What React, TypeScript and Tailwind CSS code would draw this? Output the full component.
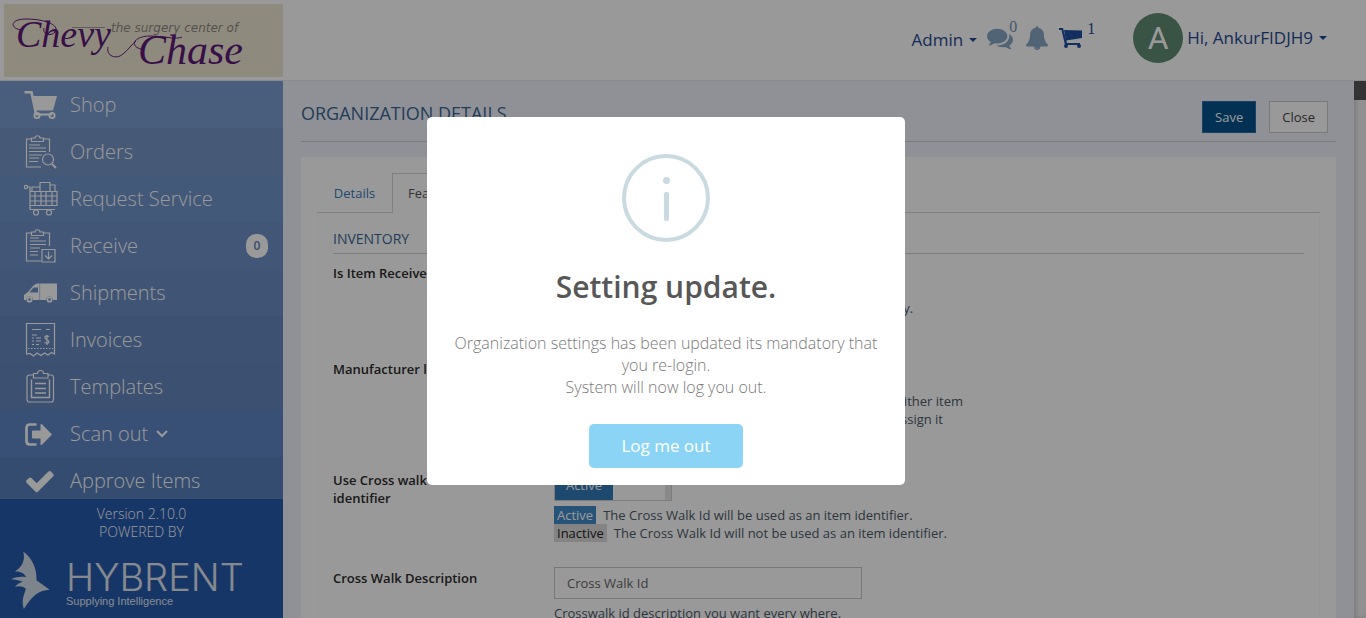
import type { ReactNode } from "react";

function Line({ children, label }: { children: ReactNode; label: string }) {
  return (
    <svg viewBox="0 0 34 36" className="h-9 w-[34px] shrink-0" fill="none" stroke="white" strokeWidth="1.2" data-icon={label} aria-hidden="true">
      {children}
    </svg>
  );
}

const CartIcon = (
  <Line label="cart">
    <path d="M0.5 5.2H7.500L12 27" strokeWidth="2.6" />
    <path d="M8 9H33L29 23.500H11Z" fill="white" stroke="none" />
    <path d="M12 27.500H28" strokeWidth="2.2" />
    <circle cx="13" cy="28.500" r="2.600" strokeWidth="2" />
    <circle cx="28" cy="28.500" r="2.600" strokeWidth="2" />
  </Line>
);

const clip = (
  <>
    <path d="M7 5H2.500V33H17M20 5H25.500V18" />
    <path d="M7.500 4H11C11 1 16 1 16 4H19.500V7.500H7.500Z" />
  </>
);

const OrdersIcon = (
  <Line label="orders">
    {clip}
    <path d="M5 11H16M5 14H22M5 17.500H22M5 21H18M5 24H15M5 27.500H14" />
    <circle cx="24" cy="25.500" r="5.500" />
    <path d="M28 30L32 34" strokeWidth="1.800" />
  </Line>
);

const RequestIcon = (
  <Line label="request">
    <circle cx="2" cy="6" r="1.700" />
    <path d="M4 6H6V28.500H31M6 10.500H33V24.500H6M8 10V6H16M16 10V1.500H26V10M26 4H31V10" />
    <path d="M6 15H33M6 20H33M11 10V25M17 10V25M22 10V25M28 10V25" />
    <circle cx="12" cy="31.500" r="2.500" />
    <circle cx="25" cy="31.500" r="2.500" />
  </Line>
);

const ReceiveIcon = (
  <Line label="receive">
    {clip}
    <path d="M6 10H15M6 13H22M6 16.500H22M6 20H16M6 23.500H14M6 27H14" />
    <path d="M18 21.500H31V34H18Z" />
    <path d="M24.500 23.500V31M21 27.500L24.500 31L28 27.500" />
  </Line>
);

const TruckIcon = (
  <Line label="truck">
    <path d="M16 8.500H33V25H29A3.500 3.500 0 0 0 22 25H9A3.500 3.500 0 0 0 2 25H0V20L4 17L9 11C11 9 13 8.500 15.500 8.500Z" fill="white" stroke="none" />
    <path d="M5.500 17.500L9.500 12.500H14V17.500Z" fill="#6c8fc6" stroke="none" />
    <path d="M15.700 8.500V25" stroke="#9db5da" strokeWidth="0.800" />
    <circle cx="5.500" cy="24.500" r="2.200" strokeWidth="1.800" />
    <circle cx="25.500" cy="24.500" r="2.200" strokeWidth="1.800" />
  </Line>
);

const InvoiceIcon = (
  <Line label="invoice">
    <path d="M2.500 32V1.500H30.500V32L27.500 30.500L24 33L20.500 31L17 33.500L13 31L9.500 34L6 31.500Z" />
    <path d="M8 7.500H17M22 7.500H26M8 13H13M8 16H10M12 16H17M8 19H10M12 19H17M8 22.500H10M12 22.500H15" />
    <path d="M25 14.500C22 13 20.500 14 21 16C21.500 18 25 17.500 25 20C24.500 21.500 22.500 21.500 20.500 20.500M23 13V23" />
    <path d="M4 26.500H29" strokeDasharray="1.500 1.500" />
  </Line>
);

const TemplatesIcon = (
  <Line label="templates">
    <path d="M9 6H5.500Q3 6 3 8.500V30.500Q3 33 5.500 33H27Q29.500 33 29.500 30.500V8.500Q29.500 6 27 6H24" />
    <path d="M9.500 4.500H13.500C13.500 0.500 19.500 0.500 19.500 4.500H24V9H9.500Z" />
    <path d="M7.500 10.500V28.500H25.500V10.500M11 14.500H22M11 19.500H22M11 24H22" strokeWidth="1.400" />
  </Line>
);

const ScanIcon = (
  <Line label="scan-out">
    <path d="M12.500 8.500H6Q2.500 8.500 2.500 12V25Q2.500 28.500 6 28.500H12.500" strokeWidth="2.700" />
    <path d="M9 14.500H16.500V8.500Q17 7.500 18 8.300L28 18.500L18 28.700Q17 29.500 16.500 28.500V22.500H9Q8 22.500 8 21.500V15.500Q8 14.500 9 14.500Z" fill="white" stroke="none" />
  </Line>
);

const CheckIcon = (
  <svg viewBox="60 0 1792 1792" className="h-[34px] w-[34px] shrink-0 p-px" fill="white" aria-hidden="true">
    <path d="M1671 566q0 40-28 68l-724 724-136 136q-28 28-68 28t-68-28l-136-136-362-362q-28-28-28-68t28-68l136-136q28-28 68-28t68 28l294 295 656-657q28-28 68-28t68 28l136 136q28 28 28 68z" />
  </svg>
);

const menu = [
  { name: "Shop", icon: CartIcon, tone: "bg-[#7b9bcf]" },
  { name: "Orders", icon: OrdersIcon, tone: "bg-[#7696c7]" },
  { name: "Request Service", icon: RequestIcon, tone: "bg-[#7094ca]" },
  { name: "Receive", icon: ReceiveIcon, tone: "bg-[#6e90c8]", badge: "0" },
  { name: "Shipments", icon: TruckIcon, tone: "bg-[#6b8cc3]" },
  { name: "Invoices", icon: InvoiceIcon, tone: "bg-[#6789be]" },
  { name: "Templates", icon: TemplatesIcon, tone: "bg-[#6486bc]" },
  { name: "Scan out", icon: ScanIcon, tone: "bg-[#5f86c5]", open: true },
  { name: "Approve Items", icon: CheckIcon, tone: "bg-[#577fbb]" },
];

function Caret() {
  return <span aria-hidden="true" className="border-x-4 border-t-4 border-x-transparent border-t-current" />;
}

function BrandLogo() {
  return (
    <svg viewBox="0 0 279 73" className="block h-[73px] w-full bg-[#efe7d3]" preserveAspectRatio="xMinYMid meet" role="img" aria-label="Chevy Chase, the surgery center of">
      <g fill="none" stroke="#5e1a78" strokeWidth="1">
        <path d="M18 26C6 25 5 15 22 15C42 15 58 22 50 29C45 33 38 29 40 24" />
        <path d="M137 45C125 42 130 32 146 32C160 32 172 36 178 33" />
        <path d="M104 43C102 52 112 56 119 50C124 46 128 40 132 37" />
      </g>
      <path d="M68 23.500H101" stroke="#a39d92" strokeWidth="1" />
      <text x="107" y="28" fontFamily="DejaVu Sans, sans-serif" fontStyle="italic" fontSize="12" fill="#8f8a84">the surgery center of</text>
      <g fontFamily="Liberation Serif, serif" fontStyle="italic" fill="#5e1a78">
        <text x="12" y="43" fontSize="38">Chevy</text>
        <text x="134" y="60" fontSize="42">Chase</text>
      </g>
    </svg>
  );
}

function Header() {
  return (
    <header className="flex shrink-0 items-start border-b border-[#e4e6ea] bg-white">
      <div className="w-[283px] shrink-0 pt-1 pb-[3px] pl-1">
        <BrandLogo />
      </div>
      <div className="flex flex-1 items-center justify-end pt-[13px] pr-[39px] text-[17px] leading-6 text-[#1f4a94]">
        <button className="flex items-center gap-[6px] pt-1">
          Admin <Caret />
        </button>
        <button className="relative ml-[10px]" aria-label="Messages">
          <svg viewBox="0 0 1792 1792" className="h-[26px] w-[26px]" fill="#87a7c5">
            <path d="M1408 768q0 139-94 257t-256.500 186.500-353.500 68.500q-86 0-176-16-124 88-278 128-36 9-86 16h-3q-11 0-20.500-8t-11.500-21q-1-3-1-6.500t.5-6.500 2-6l2.500-5 3.500-5.500 4-5 4.500-5 4-4.500q5-6 23-25t26-29.500 22.500-29 25-38.500 20.500-44q-124-72-195-177t-71-224q0-139 94-257t256.500-186.500 353.500-68.500 353.500 68.500 256.500 186.500 94 257zm384 256q0 120-71 224.500t-195 176.500q10 24 20.500 44t25 38.500 22.500 29 26 29.500 23 25q1 1 4 4.500t4.500 5 4 5 3.500 5.500l2.500 5 2 6 .5 6.500-1 6.500q-3 14-13 22t-22 7q-50-7-86-16-154-40-278-128-90 16-176 16-271 0-472-132 58 4 88 4 161 0 309-45t264-129q125-92 192-212t67-254q0-77-23-152 129 71 204 178t75 230z" />
          </svg>
          <span className="absolute -top-2 left-[22px] font-['Liberation_Serif',serif] text-base leading-5 text-[#6f93b8]">0</span>
        </button>
        <button className="ml-3" aria-label="Notifications">
          <svg viewBox="0 0 1792 1792" className="h-6 w-6" fill="#87a7c5">
            <path d="M912 1696q0-16-16-16-59 0-101.500-42.500t-42.500-101.500q0-16-16-16t-16 16q0 73 51.500 124.500t124.500 51.500q16 0 16-16zm816-288q0 52-38 90t-90 38h-448q0 106-75 181t-181 75-181-75-75-181h-448q-52 0-90-38t-38-90q50-42 91-88t85-119.500 74.500-158.500 50-206 19.500-260q0-152 117-282.500t307-158.500q-8-19-8-39 0-40 28-68t68-28 68 28 28 68q0 20-8 39 190 28 307 158.500t117 282.500q0 139 19.500 260t50 206 74.500 158.500 85 119.500 91 88z" />
          </svg>
        </button>
        <button className="relative mr-[50px] ml-[10px]" aria-label="Cart">
          <svg viewBox="0 0 24 22" className="h-[22px] w-6" fill="#1f4f9f">
            <path d="M0 1H4L8 16H21V18H6L2.500 3H0Z" />
            <path d="M5 3L23 3.500V11L7 13.500Z" />
            <circle cx="7" cy="19" r="2" />
            <circle cx="20" cy="19" r="2" />
          </svg>
          <span className="absolute -top-2 left-7 font-['Liberation_Serif',serif] text-base leading-5">1</span>
        </button>
        <button className="flex items-center gap-1">
          <span className="flex h-[50px] w-[50px] items-center justify-center rounded-full bg-[#5f8a73] font-[Roboto,sans-serif] text-[32px] text-white">A</span>
          <span className="flex items-center gap-[6px]">
            Hi, AnkurFIDJH9 <Caret />
          </span>
        </button>
      </div>
    </header>
  );
}

function Sidebar() {
  return (
    <aside className="flex w-[283px] shrink-0 flex-col">
      <nav className="min-h-0 flex-1 overflow-hidden bg-[#577fbb]">
        {menu.map((m) => (
          <a key={m.name} href="#" className={`flex h-[47px] items-center gap-3 pr-[15px] pl-6 text-xl font-light text-white ${m.tone}`}>
            {m.icon}
            <span>{m.name}</span>
            {m.open && (
              <svg viewBox="0 0 12 8" className="-ml-1 h-2 w-3" fill="none" stroke="white" strokeWidth="2" aria-hidden="true">
                <path d="M1 1L6 6L11 1" />
              </svg>
            )}
            {m.badge && (
              <span className="ml-auto flex h-6 w-[22px] items-center justify-center rounded-[10px] bg-white text-xs font-semibold text-[#5d80b8]">{m.badge}</span>
            )}
          </a>
        ))}
      </nav>
      <footer className="shrink-0 bg-[#265aac] pt-[6px] pb-2 text-center text-sm leading-[18px] font-light text-white">
        <p>Version 2.10.0</p>
        <p>POWERED BY</p>
        <div className="mt-[10px] flex gap-4 pl-[11px] text-left">
          <svg viewBox="33 180 118 178" className="h-[59px] w-[39px]" fill="#d3dcea" aria-hidden="true">
            <path d="M70 181C98 202 112 234 110 268L150 297C118 298 96 316 72 355C63 331 73 311 78 294C67 286 56 285 45 289C52 280 60 275 69 273C56 268 44 266 33 265C50 258 65 256 79 259C73 247 60 240 45 242C68 226 77 206 70 181Z" />
          </svg>
          <div className="pt-2 text-[#e0e6ef]">
            <p className="font-[Inter,sans-serif] text-[38px] leading-9">HYBRENT</p>
            <p className="font-['Liberation_Sans',sans-serif] text-[11px] leading-3 font-normal">Supplying Intelligence</p>
          </div>
        </div>
      </footer>
    </aside>
  );
}

function Toggle({ label }: { label: string }) {
  return (
    <button aria-label={label} className="flex h-8 w-[118px] border border-[#d0d0d0] bg-white text-left text-white">
      <span className="flex h-full w-[58px] items-center justify-center bg-[#337ab7]">Active</span>
      <span className="ml-auto h-full w-[6px] bg-[#e6e6e6]" />
    </button>
  );
}

function Help({ on, off }: { on: string; off: string }) {
  return (
    <div className="mt-[5px] w-[420px]">
      <p>
        <span className="mr-[7px] inline-block bg-[#428bca] px-[3px] text-white">Active</span>
        {on}
      </p>
      <p>
        <span className="mr-[7px] inline-block bg-[#dddddd] px-[3px] text-[#222]">Inactive</span>
        {off}
      </p>
    </div>
  );
}

function Row({ label, size, children }: { label: string; size: string; children: ReactNode }) {
  return (
    <div className={`flex ${size}`}>
      <div className="w-[221px] shrink-0 pt-[2px] pr-[60px] font-semibold text-[#2b2b2b]">{label}</div>
      <div className="min-w-0 flex-1">{children}</div>
    </div>
  );
}

function Content() {
  return (
    <main className="min-w-0 flex-1 overflow-hidden bg-[#eff2fa] pr-[18px] pl-[18px] text-[13px] leading-[18px] text-[#4d5a68]">
      <div className="flex h-[61px] items-start justify-between border-b border-[#cbced4] pt-5 pr-2">
        <h1 className="text-lg leading-6 text-[#3a6797]">ORGANIZATION DETAILS</h1>
        <div className="flex gap-[13px]">
          <button className="h-8 border border-[#2a6ca8] bg-[#04538c] px-3 font-medium text-white">Save</button>
          <button className="h-8 border border-[#cccccc] bg-white px-3 text-[#444]">Close</button>
        </div>
      </div>
      <section className="mt-[15px] bg-white p-4">
        <div role="tablist" className="flex">
          <button role="tab" aria-selected="false" className="h-10 w-[75px] border-b border-[#d5d5d5] text-[#337ab7]">Details</button>
          <button role="tab" aria-selected="true" className="h-10 border border-b-0 border-[#d5d5d5] px-[15px] pb-[2px] text-[#555]">Features</button>
          <div className="flex-1 border-b border-[#d5d5d5]" />
        </div>
        <div className="border-x border-[#fafafa] px-[15px] pt-[17px]">
          <h2 className="border-b border-[#cfcfcf] pb-[5px] text-sm leading-[18px] text-[#3a6797]">INVENTORY</h2>
          <div className="pt-2">
            <Row label="Is Item Received" size="min-h-24">
              <Toggle label="Is Item Received" />
              <Help on="Received items are moved directly to the inventory." off="Items can not be received." />
            </Row>
            <Row label="Manufacturer lookup" size="min-h-[111px]">
              <Toggle label="Manufacturer lookup" />
              <p className="mt-[2px] w-[409px] text-right">
                The manufacturer will be looked up from either item
                <span className="block pr-5">catalog or vendor, and you can assign it</span>
              </p>
            </Row>
            <Row label="Use Cross walk as identifier" size="min-h-[98px]">
              <Toggle label="Use Cross walk as identifier" />
              <Help on="The Cross Walk Id will be used as an item identifier." off="The Cross Walk Id will not be used as an item identifier." />
            </Row>
            <Row label="Cross Walk Description" size="min-h-24">
              <input aria-label="Cross Walk Description" defaultValue="Cross Walk Id" className="block h-8 w-[308px] border border-[#c8c8c8] bg-white px-3 text-[#666]" />
              <p className="mt-[5px]">Crosswalk id description you want every where.</p>
            </Row>
          </div>
        </div>
      </section>
    </main>
  );
}

function Modal() {
  return (
    <div className="fixed inset-0 flex items-center justify-center bg-black/40 pr-[34px] pb-4">
      <div role="dialog" aria-modal="true" aria-labelledby="dlg-title" className="flex w-[478px] flex-col items-center rounded-[5px] bg-white px-[17px] pt-[37px] pb-[17px] text-center">
        <svg viewBox="0 0 88 88" className="h-[88px] w-[88px]" fill="none" stroke="#c9dae1" aria-hidden="true">
          <circle cx="44" cy="44" r="42" strokeWidth="4" />
          <circle cx="44.500" cy="26.500" r="3.500" fill="#c9dae1" stroke="none" />
          <rect x="42" y="38" width="5" height="29" rx="2" fill="#c9dae1" stroke="none" />
        </svg>
        <h2 id="dlg-title" className="mt-[25px] text-[30px] leading-10 font-semibold text-[#575757]">Setting update.</h2>
        <p className="mt-[25px] text-base leading-[22px] font-light text-[#797979]">
          Organization settings has been updated its mandatory that you re-login.
          <br />
          System will now log you out.
        </p>
        <button className="mt-[26px] h-11 rounded-[5px] bg-[#8cd4f5] px-8 text-[17px] font-medium text-white">Log me out</button>
      </div>
    </div>
  );
}

export default function App() {
  return (
    <div className="flex h-screen flex-col overflow-hidden font-['Open_Sans',sans-serif]">
      <Header />
      <div className="flex min-h-0 flex-1">
        <Sidebar />
        <Content />
        <div aria-hidden="true" className="w-3 shrink-0 bg-[#f2f2f2] shadow-[inset_2px_0_4px_#ccc]">
          <div className="h-[19px] bg-[#555]" />
        </div>
      </div>
      <Modal />
    </div>
  );
}
